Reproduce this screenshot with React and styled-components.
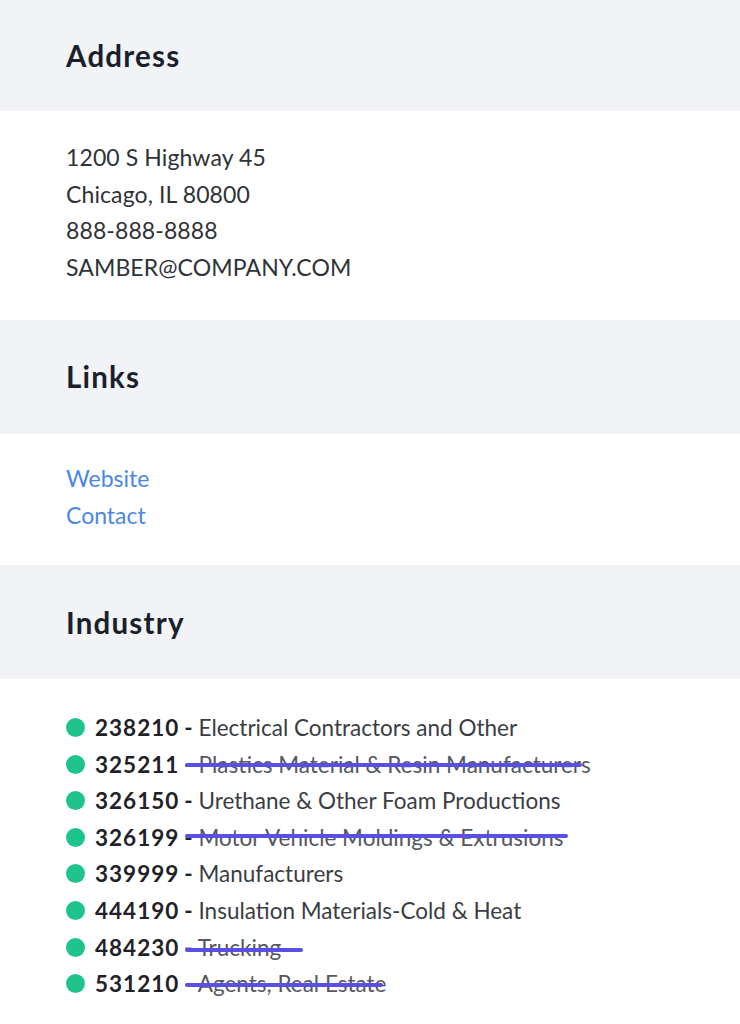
import React from "react";
import styled, { createGlobalStyle } from "styled-components";

const GlobalStyle = createGlobalStyle`
  html, body {
    margin: 0;
    padding: 0;
    background: #ffffff;
  }
  body {
    font-family: Lato, "Open Sans", sans-serif;
  }
`;

// strike: hand-drawn marker line, length and vertical nudge in px
const industries = [
  { code: "238210", name: "Electrical Contractors and Other" },
  { code: "325211", name: "Plastics Material & Resin Manufacturers", strike: { len: 397, dy: 1 } },
  { code: "326150", name: "Urethane & Other Foam Productions" },
  { code: "326199", name: "Motor Vehicle Moldings & Extrusions", strike: { len: 383, dy: -1 } },
  { code: "339999", name: "Manufacturers" },
  { code: "444190", name: "Insulation Materials-Cold & Heat" },
  { code: "484230", name: "Trucking", strike: { len: 118, dy: 3 } },
  { code: "531210", name: "Agents, Real Estate", strike: { len: 198, dy: 1 } },
];

export default function App() {
  return (
    <Page>
      <GlobalStyle />
      <SectionHead $h={111}>
        <h2>Address</h2>
      </SectionHead>
      <SectionBody $top={28} $bottom={34}>
        <Line>1200 S Highway 45</Line>
        <Line>Chicago, IL 80800</Line>
        <Line>888-888-8888</Line>
        <Line>SAMBER@COMPANY.COM</Line>
      </SectionBody>

      <SectionHead $h={114}>
        <h2>Links</h2>
      </SectionHead>
      <SectionBody $top={26} $bottom={32}>
        <LinkLine href="#">Website</LinkLine>
        <LinkLine href="#">Contact</LinkLine>
      </SectionBody>

      <SectionHead $h={114}>
        <h2>Industry</h2>
      </SectionHead>
      <SectionBody $top={30} $bottom={20}>
        <IndustryList>
          {industries.map((item) => (
            <IndustryRow key={item.code}>
              <Dot />
              <Code>{item.code}</Code>
              <Desc $struck={!!item.strike}>
                <span>-</span> {item.name}
                {item.strike && (
                  <Marker $len={item.strike.len} $dy={item.strike.dy} />
                )}
              </Desc>
            </IndustryRow>
          ))}
        </IndustryList>
      </SectionBody>
    </Page>
  );
}

const Page = styled.div`
  width: 740px;
  min-height: 1024px;
  background: #ffffff;
`;

const SectionHead = styled.div`
  height: ${(p) => p.$h}px;
  display: flex;
  align-items: center;
  padding: 0 66px;
  background: #f1f3f7;
  h2 {
    margin: 0;
    font-size: 29.5px;
    font-weight: 700;
    color: #1b1f2b;
    letter-spacing: 1.2px;
  }
`;

const SectionBody = styled.div`
  display: flex;
  flex-direction: column;
  padding: ${(p) => p.$top}px 66px ${(p) => p.$bottom}px;
`;

const Line = styled.div`
  font-size: 23px;
  line-height: 36.7px;
  letter-spacing: 0.1px;
  color: #2f3237;
`;

const LinkLine = styled.a`
  font-size: 23px;
  line-height: 36.7px;
  color: #4a88e6;
  text-decoration: none;
`;

const IndustryList = styled.ul`
  list-style: none;
  margin: 0;
  padding: 0;
`;

const IndustryRow = styled.li`
  display: flex;
  align-items: center;
  height: 36.6px;
  font-size: 22.5px;
`;

const Dot = styled.span`
  width: 19px;
  height: 19px;
  border-radius: 50%;
  background: #1fc38d;
  margin-right: 10px;
  flex-shrink: 0;
`;

const Code = styled.span`
  font-weight: 700;
  color: #1f2228;
  letter-spacing: 1px;
  margin-right: 5px;
`;

const Desc = styled.span`
  position: relative;
  color: ${(p) => (p.$struck ? "#55585e" : "#3a3d43")};
  span {
    font-weight: 700;
    color: #1f2228;
  }
`;

const Marker = styled.i`
  position: absolute;
  left: 1px;
  top: calc(50% - 2px + ${(p) => p.$dy}px);
  width: ${(p) => p.$len}px;
  height: 4px;
  border-radius: 2px;
  background: #5a4fe3;
`;
